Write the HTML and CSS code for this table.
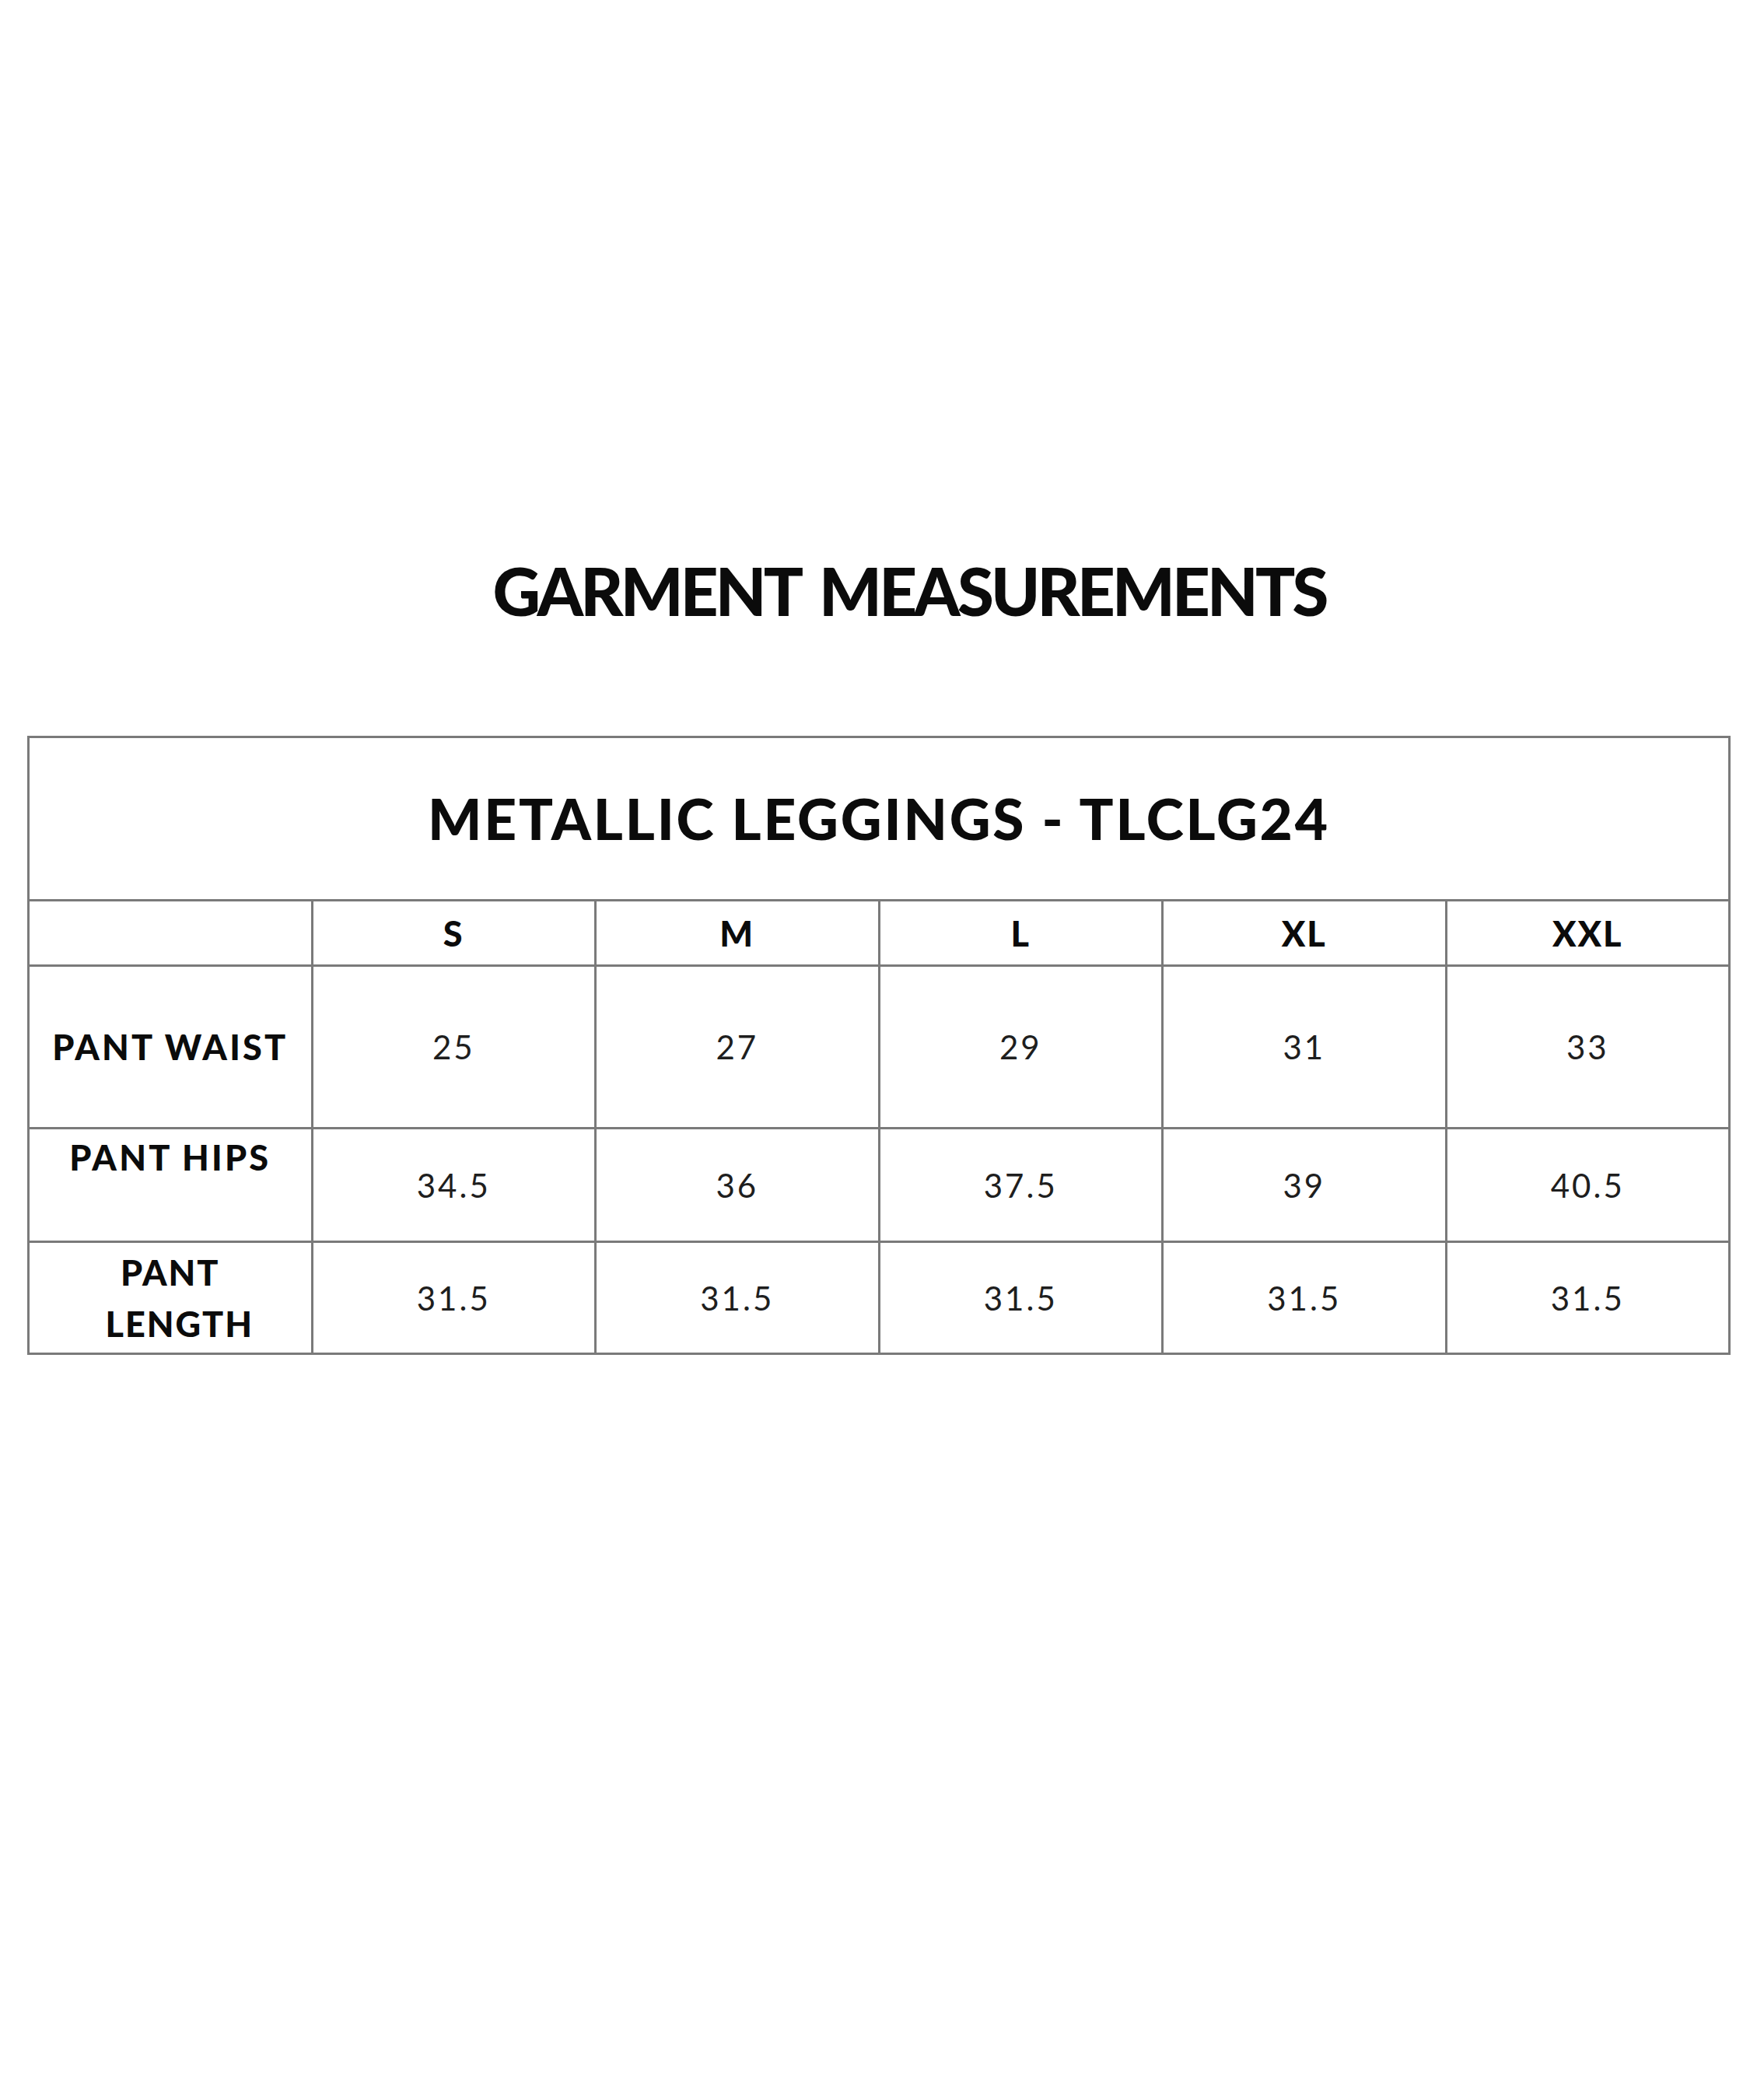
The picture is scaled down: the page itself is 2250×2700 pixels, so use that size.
FILE: index.html
```html
<!DOCTYPE html>
<html lang="en">
<head>
<meta charset="utf-8">
<title>Garment Measurements</title>
<link rel="stylesheet" href="styles.css">
</head>
<body>
<div class="page">
  <h1 class="title">GARMENT MEASUREMENTS</h1>
  <div class="chart">
    <div class="cell caption">METALLIC LEGGINGS - TLCLG24</div>

    <div class="cell"></div>
    <div class="cell size">S</div>
    <div class="cell size">M</div>
    <div class="cell size">L</div>
    <div class="cell size">XL</div>
    <div class="cell size">XXL</div>

    <div class="cell label">PANT WAIST</div>
    <div class="cell value">25</div>
    <div class="cell value">27</div>
    <div class="cell value">29</div>
    <div class="cell value">31</div>
    <div class="cell value">33</div>

    <div class="cell label label-top">PANT HIPS</div>
    <div class="cell value">34.5</div>
    <div class="cell value">36</div>
    <div class="cell value">37.5</div>
    <div class="cell value">39</div>
    <div class="cell value">40.5</div>

    <div class="cell label"><span class="two-line">PANT<br><span class="shift">LENGTH</span></span></div>
    <div class="cell value">31.5</div>
    <div class="cell value">31.5</div>
    <div class="cell value">31.5</div>
    <div class="cell value">31.5</div>
    <div class="cell value">31.5</div>
  </div>
</div>
</body>
</html>
```

FILE: styles.css
```css
html, body {
  margin: 0;
  padding: 0;
  background: #ffffff;
}

.page {
  width: 2250px;
  min-height: 2700px;
  padding-top: 709px;
  box-sizing: border-box;
  font-family: "Lato", "DejaVu Sans", sans-serif;
  color: #0b0b0b;
}

.title {
  margin: 0;
  padding-left: 88px;
  text-align: center;
  font-size: 85px;
  line-height: 100px;
  font-weight: 900;
  letter-spacing: -3.8px;
  word-spacing: 10px;
}

.chart {
  margin: 137px 0 0 35px;
  width: 2190px;
  box-sizing: border-box;
  display: grid;
  grid-template-columns: repeat(6, 1fr);
  grid-template-rows: 207px 81px 206px 143px 141px;
  gap: 3px;
  padding: 3px;
  background: #7a7a7a;
}

.cell {
  background: #ffffff;
  display: flex;
  align-items: center;
  justify-content: center;
  text-align: center;
}

.caption {
  grid-column: 1 / -1;
  font-size: 73px;
  font-weight: 900;
  letter-spacing: 2.8px;
  line-height: 1;
}

.size,
.label {
  font-size: 45px;
  font-weight: 900;
  letter-spacing: 3.2px;
  line-height: 66px;
}

.size {
  letter-spacing: 2px;
}

.label-top {
  align-items: flex-start;
  padding-top: 3px;
}

.two-line {
  display: block;
  letter-spacing: 2px;
}

.shift {
  padding-left: 24px;
}

.value {
  font-size: 42px;
  font-weight: 400;
  letter-spacing: 3px;
  color: #1e1e1e;
  line-height: 1;
}
```
